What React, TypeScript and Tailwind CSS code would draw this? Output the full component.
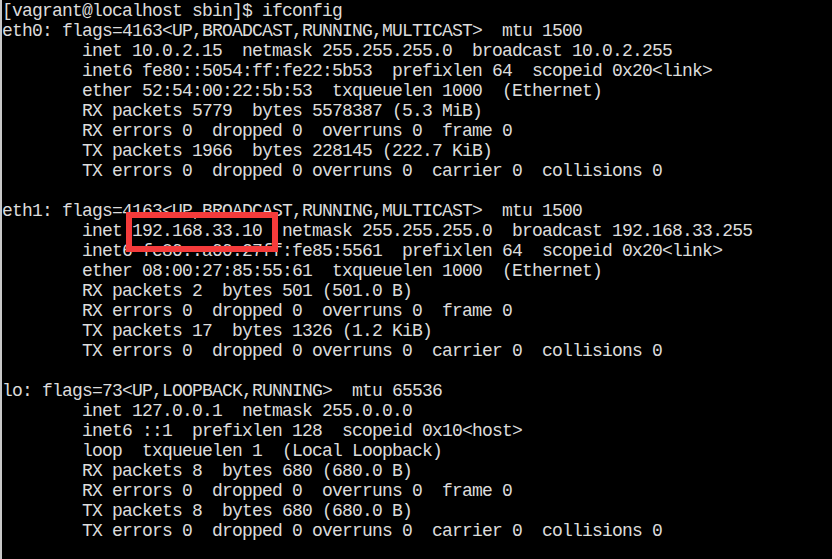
const lines = [
    "[vagrant@localhost sbin]$ ifconfig",
    "eth0: flags=4163<UP,BROADCAST,RUNNING,MULTICAST>  mtu 1500",
    "        inet 10.0.2.15  netmask 255.255.255.0  broadcast 10.0.2.255",
    "        inet6 fe80::5054:ff:fe22:5b53  prefixlen 64  scopeid 0x20<link>",
    "        ether 52:54:00:22:5b:53  txqueuelen 1000  (Ethernet)",
    "        RX packets 5779  bytes 5578387 (5.3 MiB)",
    "        RX errors 0  dropped 0  overruns 0  frame 0",
    "        TX packets 1966  bytes 228145 (222.7 KiB)",
    "        TX errors 0  dropped 0 overruns 0  carrier 0  collisions 0",
    "",
    "eth1: flags=4163<UP,BROADCAST,RUNNING,MULTICAST>  mtu 1500",
    "        inet 192.168.33.10  netmask 255.255.255.0  broadcast 192.168.33.255",
    "        inet6 fe80::a00:27ff:fe85:5561  prefixlen 64  scopeid 0x20<link>",
    "        ether 08:00:27:85:55:61  txqueuelen 1000  (Ethernet)",
    "        RX packets 2  bytes 501 (501.0 B)",
    "        RX errors 0  dropped 0  overruns 0  frame 0",
    "        TX packets 17  bytes 1326 (1.2 KiB)",
    "        TX errors 0  dropped 0 overruns 0  carrier 0  collisions 0",
    "",
    "lo: flags=73<UP,LOOPBACK,RUNNING>  mtu 65536",
    "        inet 127.0.0.1  netmask 255.0.0.0",
    "        inet6 ::1  prefixlen 128  scopeid 0x10<host>",
    "        loop  txqueuelen 1  (Local Loopback)",
    "        RX packets 8  bytes 680 (680.0 B)",
    "        RX errors 0  dropped 0  overruns 0  frame 0",
    "        TX packets 8  bytes 680 (680.0 B)",
    "        TX errors 0  dropped 0 overruns 0  carrier 0  collisions 0",
];

export default function App() {
    return (
        <div className="w-[832px] h-[559px] bg-black border-l-2 border-[#c8c8c8] overflow-hidden">
            <div className="relative">
                <pre className="pt-[1px] font-['Liberation_Mono',monospace] text-[18px] tracking-[-0.8px] leading-[20px] text-[#dcdcdc] whitespace-pre">
                    {lines.map((line, i) => (
                        <div key={i} className="h-[20px]">
                            {line}
                        </div>
                    ))}
                </pre>
                {/* highlight around the eth1 address */}
                <div className="absolute left-[124px] top-[212px] w-[152px] h-[40px] border-[6px] border-[#f53b3b]" />
            </div>
        </div>
    );
}
